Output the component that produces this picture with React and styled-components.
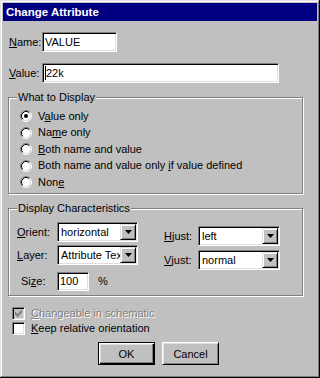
import React from 'react';
import styled, { createGlobalStyle } from 'styled-components';

const GlobalStyle = createGlobalStyle`
  html, body {
    margin: 0;
    padding: 0;
    background: #c0c0c0;
  }
  body {
    font-family: 'Liberation Sans', Arial, sans-serif;
    font-size: 11px;
    color: #000;
  }
  * {
    box-sizing: border-box;
  }
`;

const Window = styled.div`
  width: 320px;
  height: 378px;
  padding: 3px;
  background: #c0c0c0;
  box-shadow: inset -1px -1px #000, inset 1px 1px #dfdfdf,
    inset -2px -2px #808080, inset 2px 2px #fff;
  display: flex;
  flex-direction: column;
`;

const TitleBar = styled.div`
  height: 18px;
  flex: none;
  background: #000080;
  color: #fff;
  font-weight: bold;
  font-size: 11.5px;
  line-height: 18px;
  padding-left: 3px;
  white-space: nowrap;
`;

const Body = styled.div`
  padding: 11px 0 0 5px;
  line-height: 13px;
`;

const Key = styled.span`
  text-decoration: underline;
  text-underline-offset: 1px;
`;

const FieldRow = styled.div`
  display: flex;
  align-items: center;
  height: 20px;
  padding-left: 1px;
  margin-bottom: ${(p) => p.gap || 0}px;
`;

const FieldLabel = styled.label`
  width: ${(p) => p.w}px;
  padding-left: ${(p) => p.indent || 0}px;
  flex: none;
`;

const Sunken = styled.div`
  width: ${(p) => p.w}px;
  height: ${(p) => p.h || 20}px;
  background: #fff;
  border: 1px solid;
  border-color: #808080 #fff #fff #808080;
  box-shadow: inset 1px 1px #000, inset -1px -1px #dfdfdf;
  padding: 1px 1px 1px 2px;
  display: flex;
  align-items: center;
  white-space: nowrap;
  overflow: hidden;
`;

const Caret = styled.span`
  display: inline-block;
  width: 1px;
  height: 14px;
  background: #000;
  flex: none;
`;

const Group = styled.div`
  position: relative;
  width: ${(p) => p.w}px;
  height: ${(p) => p.h}px;
  margin-top: 14px;
  margin-left: ${(p) => p.indent || 0}px;
  border: 1px solid #808080;
  box-shadow: inset 1px 1px #fff, 1px 1px #fff;
`;

const Legend = styled.span`
  position: absolute;
  top: -7px;
  left: 8px;
  padding: 0 1px;
  background: #c0c0c0;
  line-height: 13px;
  white-space: nowrap;
`;

const RadioList = styled.div`
  padding: 10px 0 0 11px;
`;

const RadioRow = styled.div`
  display: flex;
  align-items: center;
  height: 16.5px;
  gap: 6px;
  white-space: nowrap;
`;

const Columns = styled.div`
  display: flex;
  gap: 25px;
  padding: 13px 0 0 7px;
`;

const Column = styled.div`
  display: flex;
  flex-direction: column;
  padding-top: ${(p) => p.top || 0}px;
`;

const SelectText = styled.span`
  flex: 1;
  overflow: hidden;
  white-space: nowrap;
  padding-left: 1px;
`;

const DropButton = styled.span`
  width: 16px;
  height: 100%;
  flex: none;
  background: #c0c0c0;
  border: 1px solid;
  border-color: #dfdfdf #000 #000 #dfdfdf;
  box-shadow: inset 1px 1px #fff, inset -1px -1px #808080;
  display: flex;
  align-items: center;
  justify-content: center;
`;

const Percent = styled.span`
  margin-left: 9px;
`;

const CheckRow = styled.div`
  display: flex;
  align-items: center;
  height: 15px;
  padding-left: 4px;
  gap: 6px;
  margin-top: ${(p) => p.top || 0}px;
  color: ${(p) => (p.disabled ? '#808080' : '#000')};
  text-shadow: ${(p) => (p.disabled ? '1px 1px 0 #fff' : 'none')};
  white-space: nowrap;
`;

const CheckBox = styled.span`
  width: 13px;
  height: 13px;
  flex: none;
  background: ${(p) => (p.disabled ? '#c0c0c0' : '#fff')};
  border: 1px solid;
  border-color: #808080 #fff #fff #808080;
  box-shadow: inset 1px 1px #000, inset -1px -1px #dfdfdf;
  display: flex;
  align-items: center;
  justify-content: center;
`;

const ButtonRow = styled.div`
  display: flex;
  gap: 7px;
  padding-left: 90px;
  margin-top: 6px;
`;

const Button = styled.button`
  width: 57px;
  height: 23px;
  padding: 0;
  font-family: inherit;
  font-size: 11px;
  color: #000;
  background: #c0c0c0;
  border: 1px solid;
  border-color: ${(p) => (p.primary ? '#000' : '#fff #000 #000 #fff')};
  box-shadow: ${(p) =>
    p.primary
      ? 'inset 1px 1px #fff, inset -1px -1px #000, inset -2px -2px #808080, inset 2px 2px #dfdfdf'
      : 'inset 1px 1px #dfdfdf, inset -1px -1px #808080'};
`;

const Arrow = () => (
  <svg width="7" height="4" viewBox="0 0 7 4">
    <path d="M0 0h7L3.5 4z" fill="#000" />
  </svg>
);

const Radio = ({ checked }) => (
  <svg width="12" height="12" viewBox="0 0 12 12" style={{ flex: 'none' }}>
    <circle cx="6" cy="6" r="4.5" fill="#fff" />
    <path d="M2.11 9.89A5.5 5.5 0 0 1 9.89 2.11" fill="none" stroke="#808080" />
    <path d="M9.89 2.11A5.5 5.5 0 0 1 2.11 9.89" fill="none" stroke="#fff" />
    <path d="M2.82 9.18A4.5 4.5 0 0 1 9.18 2.82" fill="none" stroke="#000" />
    <path d="M9.18 2.82A4.5 4.5 0 0 1 2.82 9.18" fill="none" stroke="#dfdfdf" />
    {checked && <circle cx="6" cy="6" r="2" fill="#000" />}
  </svg>
);

const Check = ({ color }) => (
  <svg width="7" height="7" viewBox="0 0 7 7">
    <path
      d="M0 2h1v3H0zM1 3h1v3H1zM2 4h1v3H2zM3 3h1v3H3zM4 2h1v3H4zM5 1h1v3H5zM6 0h1v3H6z"
      fill={color}
    />
  </svg>
);

const Select = ({ w, value }) => (
  <Sunken w={w}>
    <SelectText>{value}</SelectText>
    <DropButton>
      <Arrow />
    </DropButton>
  </Sunken>
);

const options = [
  [<>V<Key>a</Key>lue only</>, true],
  [<>Na<Key>m</Key>e only</>, false],
  [<><Key>B</Key>oth name and value</>, false],
  [<>Both name and value only <Key>i</Key>f value defined</>, false],
  [<>Non<Key>e</Key></>, false],
];

export default function App() {
  return (
    <>
      <GlobalStyle />
      <Window>
        <TitleBar>Change Attribute</TitleBar>
        <Body>
          <FieldRow gap={11}>
            <FieldLabel w={33}>
              <Key>N</Key>ame:
            </FieldLabel>
            <Sunken w={75}>VALUE</Sunken>
          </FieldRow>
          <FieldRow>
            <FieldLabel w={33}>
              <Key>V</Key>alue:
            </FieldLabel>
            <Sunken w={237}>
              <Caret />
              22k
            </Sunken>
          </FieldRow>

          <Group w={295} h={97}>
            <Legend>What to Display</Legend>
            <RadioList>
              {options.map(([label, checked], i) => (
                <RadioRow key={i}>
                  <Radio checked={checked} />
                  <span>{label}</span>
                </RadioRow>
              ))}
            </RadioList>
          </Group>

          <Group w={295} h={88}>
            <Legend>Display Characteristics</Legend>
            <Columns>
              <Column>
                <FieldRow gap={3}>
                  <FieldLabel w={40}>
                    <Key>O</Key>rient:
                  </FieldLabel>
                  <Select w={81} value="horizontal" />
                </FieldRow>
                <FieldRow gap={6}>
                  <FieldLabel w={40}>
                    <Key>L</Key>ayer:
                  </FieldLabel>
                  <Select w={81} value="Attribute Text" />
                </FieldRow>
                <FieldRow>
                  <FieldLabel w={40} indent={4}>
                    Si<Key>z</Key>e:
                  </FieldLabel>
                  <Sunken w={32} h={19}>
                    100
                  </Sunken>
                  <Percent>%</Percent>
                </FieldRow>
              </Column>
              <Column top={4}>
                <FieldRow gap={4}>
                  <FieldLabel w={34}>
                    <Key>H</Key>just:
                  </FieldLabel>
                  <Select w={82} value="left" />
                </FieldRow>
                <FieldRow>
                  <FieldLabel w={34}>
                    <Key>V</Key>just:
                  </FieldLabel>
                  <Select w={82} value="normal" />
                </FieldRow>
              </Column>
            </Columns>
          </Group>

          <CheckRow top={10} disabled>
            <CheckBox disabled>
              <Check color="#808080" />
            </CheckBox>
            <span>
              <Key>C</Key>hangeable in schematic
            </span>
          </CheckRow>
          <CheckRow>
            <CheckBox />
            <span>
              <Key>K</Key>eep relative orientation
            </span>
          </CheckRow>

          <ButtonRow>
            <Button primary>OK</Button>
            <Button>Cancel</Button>
          </ButtonRow>
        </Body>
      </Window>
    </>
  );
}
